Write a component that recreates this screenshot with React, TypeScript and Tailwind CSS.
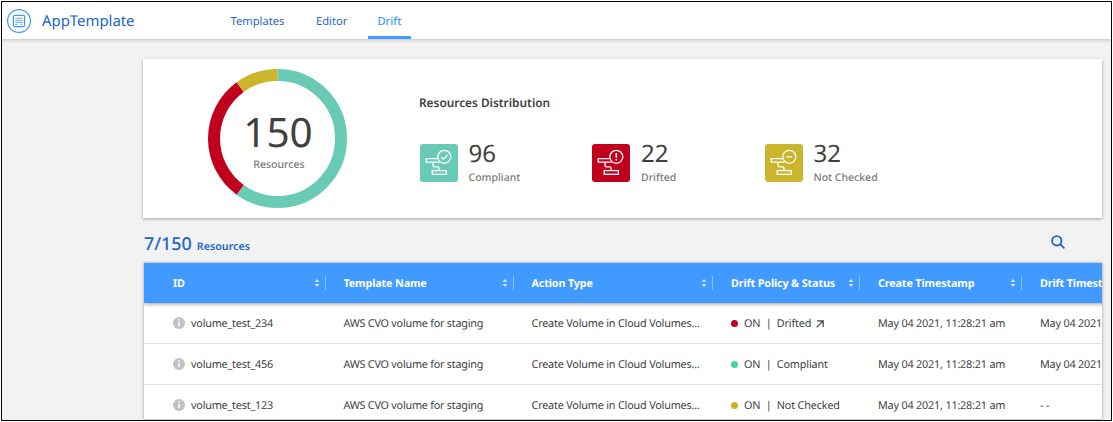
import React from "react";

const columns = [
  { label: "ID", width: "w-[170.5px]" },
  { label: "Template Name", width: "w-[188px]" },
  { label: "Action Type", width: "w-[199.5px]" },
  { label: "Drift Policy & Status", width: "w-[147px]" },
  { label: "Create Timestamp", width: "w-[162px]" },
  { label: "Drift Timestamp", width: "w-[160px]" },
];

const rows = [
  { id: "volume_test_234", status: "Drifted", dot: "bg-[#c0001d]", drift: "May 04 2021, 11:28:21 am" },
  { id: "volume_test_456", status: "Compliant", dot: "bg-[#46d596]", drift: "May 04 2021, 11:28:21 am" },
  { id: "volume_test_123", status: "Not Checked", dot: "bg-[#c8b32a]", drift: "- -" },
];

const stats = [
  { value: "96", label: "Compliant", color: "bg-[#69cbb5]", kind: "check" },
  { value: "22", label: "Drifted", color: "bg-[#c0001d]", kind: "alert" },
  { value: "32", label: "Not Checked", color: "bg-[#cab52d]", kind: "minus" },
];

function Logo() {
  return (
    <svg className="h-6 w-6 shrink-0" viewBox="0 0 24 24" fill="none" stroke="#3f97f3">
      <circle cx="12" cy="12" r="11.4" strokeWidth="1.2" />
      <rect x="6.4" y="6.4" width="11.2" height="11.2" rx="1.5" strokeWidth="1.2" />
      <path d="M8.3 9.3h7.400M8.300 11.300h7.400M8.300 13.300h7.400M8.300 15.300h2.200M13.500 15.300h2.200" strokeWidth="1" opacity=".8" />
    </svg>
  );
}

function StatIcon({ kind }: { kind: string }) {
  return (
    <svg className="h-[38px] w-[38px]" viewBox="0 0 38 38" fill="none" stroke="white" strokeWidth="1.3">
      <path d="M17.500 14.600H6.200v3.500h13.500M13 18.100v3.400q0 1.300 1.300 1.300h3.400q1.300 0 1.300 1.300v2.400" />
      <rect x="12.200" y="26.600" width="14.200" height="3.700" />
      <circle cx="24.300" cy="12.800" r="6.500" />
      {kind === "check" && <path d="m21.300 12.900 2.200 2.200 4-4.200" />}
      {kind === "alert" && <path d="M24.300 9v4.800M24.300 15.100v1.500" strokeWidth="1.500" />}
      {kind === "minus" && <path d="M21.500 12.900h5.600" />}
    </svg>
  );
}

function Donut() {
  return (
    <svg className="col-start-1 row-start-1 h-[140px] w-[140px]" viewBox="0 0 140 140" fill="none" strokeWidth="12">
      <g transform="rotate(-90 69.500 69.500)">
        <circle cx="69.500" cy="69.500" r="63.500" pathLength="100" stroke="#69cbb5" strokeDasharray="60 40" />
        <circle cx="69.500" cy="69.500" r="63.500" pathLength="100" stroke="#c0001d" strokeDasharray="30 70" strokeDashoffset="-60" />
        <circle cx="69.500" cy="69.500" r="63.500" pathLength="100" stroke="#cab52d" strokeDasharray="10 90" strokeDashoffset="-90" />
      </g>
    </svg>
  );
}

function Sorter() {
  return (
    <svg className="h-[8px] w-[6px]" viewBox="0 0 6 8" fill="#d5dfeb">
      <path d="M3 0 5.500 3H.5ZM3 8 .5 5h5Z" />
    </svg>
  );
}

export default function App() {
  return (
    <div className="h-[422px] w-[1113px] overflow-hidden bg-white p-px font-['Noto_Sans',sans-serif] [text-rendering:geometricPrecision]">
      <div className="h-[420px] w-[1111px] overflow-hidden border border-black bg-[#f2f2f2]">
        <header className="relative flex h-[37px] bg-white shadow-[0_1px_4px_rgba(0,0,0,0.22)]">
          <div className="flex w-[216px] items-center gap-[11px] pl-[5px]">
            <Logo />
            <span className="text-[14.900px] leading-5 text-[#2265c6]">AppTemplate</span>
          </div>
          <nav className="flex text-[11.200px] text-[#2a66bf]">
            <span className="w-[98px] pl-[12.500px] pt-[12px]">Templates</span>
            <span className="w-[52px] pt-[12px]">Editor</span>
            <span className="h-[37px] w-[43px] border-b-[3px] border-[#409aff] pt-[12px] text-center font-medium text-[#409aff]">Drift</span>
          </nav>
        </header>

        <main className="pl-[141px] pr-[8px] pt-5">
          <section className="flex h-[159px] w-[959px] bg-white shadow-[0_1px_3px_rgba(0,0,0,0.35)]">
            <div className="ml-[65px] mt-[10px] grid h-[140px] w-[140px] place-items-center">
              <Donut />
              <div className="col-start-1 row-start-1 flex flex-col items-center pt-[5px]">
                <span className="text-[40.500px] leading-[44px] text-[#404040]">150</span>
                <span className="mt-[3px] pl-[2px] text-[10.500px] font-medium leading-4 text-[#7b7b7b]">Resources</span>
              </div>
            </div>
            <div className="ml-[71px] pt-[35px]">
              <h2 className="text-[11.850px] font-semibold leading-[18px] text-[#404040]">Resources Distribution</h2>
              <div className="mt-[26px] flex pl-[0.500px]">
                {stats.map((s) => (
                  <div key={s.label} className="flex w-[172.500px]">
                    <div className={"mt-[6px] h-[38px] w-[38px] rounded-[3px] " + s.color}>
                      <StatIcon kind={s.kind} />
                    </div>
                    <div className="ml-[11px] pt-px">
                      <div className="text-[24px] leading-[30px] text-[#404040]">{s.value}</div>
                      <div className="mt-[1px] text-[10.500px] font-medium leading-4 text-[#7b7b7b]">{s.label}</div>
                    </div>
                  </div>
                ))}
              </div>
            </div>
          </section>

          <div className="flex h-[45px] items-center justify-between pr-[38px] text-[#2265c6]">
            <div className="flex items-baseline gap-[5px] pl-[1px] pt-[8px]">
              <span className="text-[17.900px] font-medium">7/150</span>
              <span className="text-[10.700px] font-semibold">Resources</span>
            </div>
            <svg className="mt-[3px] h-[14px] w-[14px]" viewBox="0 0 14 14" fill="none" stroke="#2265c6" strokeWidth="1.800">
              <circle cx="5.800" cy="5.800" r="4.700" />
              <path d="m9.200 9.200 4.200 4.200" />
            </svg>
          </div>

          <section className="ml-px h-[156px] w-[958px] overflow-hidden bg-white shadow-[0_0_3px_rgba(0,0,0,0.4)]">
            <div className="relative flex h-10 w-[1060px] items-center bg-[#409aff] pl-[29px] text-[10.800px] font-bold tracking-[-0.150px] text-white shadow-[0_1px_4px_rgba(0,0,0,0.4)]">
              {columns.map((c) => (
                <div key={c.label} className={"flex shrink-0 items-center " + c.width}>
                  <span className="flex-1 whitespace-nowrap pt-[2px]">{c.label}</span>
                  <Sorter />
                  <span className="ml-[5px] mr-[18px] h-[14px] w-px bg-[#8cc2ff]" />
                </div>
              ))}
            </div>
            {rows.map((r) => (
              <div key={r.id} className="flex h-[41px] w-[1060px] items-center border-b border-[#e2e2e2] pl-[29px] text-[10.800px] tracking-[-0.190px] text-[#404040]">
                <div className="flex w-[170.500px] shrink-0 items-center gap-[6px]">
                  <svg className="h-3 w-3" viewBox="0 0 12 12">
                    <circle cx="6" cy="6" r="6" fill="#c2c2c2" />
                    <path d="M6 2.200v1.500M6 5v4.300" stroke="white" strokeWidth="1.500" />
                  </svg>
                  <span className="pt-[2px]">{r.id}</span>
                </div>
                <div className="w-[188px] shrink-0 pt-[2px] tracking-[-0.230px]">AWS CVO volume for staging</div>
                <div className="w-[199.500px] shrink-0 pt-[2px] tracking-[-0.180px]">Create Volume in Cloud Volumes...</div>
                <div className="flex w-[147px] shrink-0 items-center whitespace-pre tracking-[-0.150px]">
                  <span className={"mr-[6px] h-[7px] w-[7px] rounded-full " + r.dot} />
                  <span className="pt-[2px]">ON  |  {r.status}</span>
                  {r.status === "Drifted" && (
                    <svg className="ml-[5px] mt-px h-2 w-2" viewBox="0 0 8 8" fill="none" stroke="#404040" strokeWidth="1.200">
                      <path d="M1 .8h6.200V7M7 1 .7 7.300" />
                    </svg>
                  )}
                </div>
                <div className="w-[162px] shrink-0 whitespace-nowrap pt-[2px] tracking-[-0.180px]">May 04 2021, 11:28:21 am</div>
                <div className="whitespace-nowrap pt-[2px] tracking-[-0.180px]">{r.drift}</div>
              </div>
            ))}
          </section>
        </main>
      </div>
    </div>
  );
}
